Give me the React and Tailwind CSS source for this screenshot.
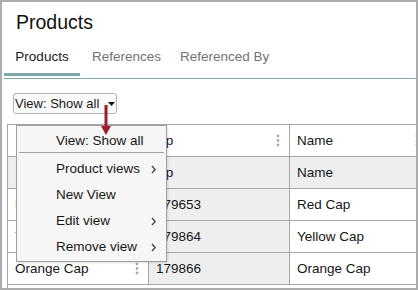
import React from "react";

function Kebab() {
  return (
    <svg width="4" height="13" viewBox="0 0 4 13" className="shrink-0">
      <circle cx="2" cy="2" r="1.4" fill="#ababab" />
      <circle cx="2" cy="6.5" r="1.4" fill="#ababab" />
      <circle cx="2" cy="11" r="1.4" fill="#ababab" />
    </svg>
  );
}

function Chevron() {
  return (
    <svg width="5" height="9" viewBox="0 0 5 9" className="shrink-0">
      <path d="M1 1 L4.2 4.5 L1 8" stroke="#3c3c3c" strokeWidth="1.2" fill="none" />
    </svg>
  );
}

function Cell({ children, kebab, gray, last }) {
  return (
    <div
      className={
        "h-[32px] shrink-0 border-r border-b border-[#a6a6a6] flex items-center justify-between pl-[7px] pr-[9px] " +
        (last ? "w-[139px] " : "w-[141px] ") +
        (gray ? "bg-[#eeeeee]" : "bg-white")
      }
    >
      <span className="whitespace-nowrap leading-[16px]">{children}</span>
      {kebab ? <Kebab /> : null}
    </div>
  );
}

const rows = [
  ["Red Cap", "179653", "Red Cap"],
  ["Yellow Cap", "179864", "Yellow Cap"],
  ["Orange Cap", "179866", "Orange Cap"],
];

function MenuItem({ label, sub }) {
  return (
    <div className="h-[26px] flex items-center justify-between pl-[39px] pr-[10px]">
      <span className="leading-[16px] whitespace-nowrap">{label}</span>
      {sub ? <Chevron /> : null}
    </div>
  );
}

export default function App() {
  return (
    <div className="w-[418px] h-[290px] box-border border-2 border-[#acacac] bg-white relative overflow-hidden font-['Liberation_Sans',Arial,sans-serif] text-[#161616]">
      <div className="flex flex-col">
        {/* Title */}
        <div className="mt-[9px] pl-[14px] text-[19.5px] leading-[22px] text-[#111]">Products</div>

        {/* Tabs */}
        <div className="mt-[16px] ml-[2px] flex border-b border-[#7fa7ae] pb-[2px] text-[13.5px]">
          <div className="w-[76px] flex flex-col items-center">
            <span className="leading-[16px] text-[#1a1a1a]">Products</span>
            <div className="mt-[8px] h-[3px] w-full bg-[#7fa7ae]" />
          </div>
          <div className="ml-[12px] flex flex-col">
            <span className="leading-[16px] text-[#727272]">References</span>
            <div className="mt-[8px] h-[3px]" />
          </div>
          <div className="ml-[19px] flex flex-col">
            <span className="leading-[16px] text-[#727272]">Referenced By</span>
            <div className="mt-[8px] h-[3px]" />
          </div>
        </div>

        {/* View button */}
        <div className="mt-[14px] ml-[11px] w-[104px] h-[21px] box-border border border-[#b4b4b4] rounded-[3px] bg-[#fbfbfb] flex items-center pl-[1px] text-[13px]">
          <span className="leading-[16px] whitespace-nowrap">View: Show all</span>
          <svg width="7" height="4" viewBox="0 0 7 4" className="ml-auto mr-[1px]">
            <polygon points="0,0 7,0 3.5,4" fill="#111" />
          </svg>
        </div>

        {/* Table */}
        <div className="mt-[10px] ml-[5px] w-[424px] border-l border-t border-[#a6a6a6] text-[13.5px]">
          <div className="flex">
            <Cell kebab></Cell>
            <Cell kebab>Up</Cell>
            <Cell kebab last>Name</Cell>
          </div>
          <div className="flex">
            <Cell gray></Cell>
            <Cell gray>Up</Cell>
            <Cell gray last>Name</Cell>
          </div>
          {rows.map((r) => (
            <div className="flex" key={r[1]}>
              <Cell kebab>{r[0]}</Cell>
              <Cell gray>{r[1]}</Cell>
              <Cell last>{r[2]}</Cell>
            </div>
          ))}
          <div className="h-[12px]" />
        </div>
      </div>

      {/* Dropdown menu */}
      <div className="absolute left-[14px] top-[123px] w-[151px] box-border border border-[#a0a0a0] bg-[#f6f6f6] text-[13.5px] pb-[1px] shadow-[1px_1px_2px_rgba(0,0,0,0.12)]">
        <div className="pt-[7px] pb-[3px] pl-[39px] leading-[16px] whitespace-nowrap">View: Show all</div>
        <div className="mx-[2px] h-px bg-[#a3a3a3] mb-[3px]" />
        <MenuItem label="Product views" sub />
        <MenuItem label="New View" />
        <MenuItem label="Edit view" sub />
        <MenuItem label="Remove view" sub />
      </div>

      {/* Red annotation arrow */}
      <svg width="11" height="31" viewBox="0 0 11 31" className="absolute left-[99px] top-[103px]">
        <rect x="3.5" y="0" width="3" height="23" fill="#a01b2b" />
        <polygon points="0,21 10,21 5,30" fill="#a01b2b" />
      </svg>
    </div>
  );
}
